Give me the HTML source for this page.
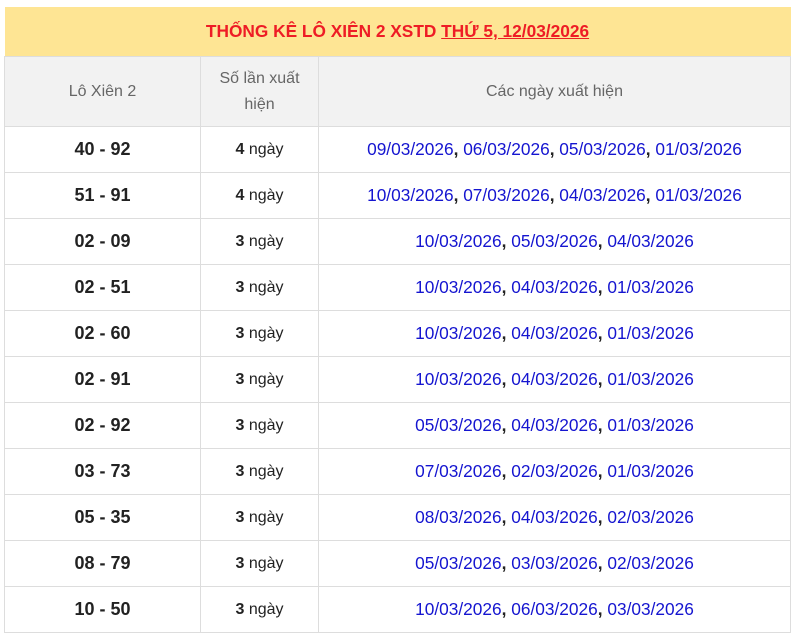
<!DOCTYPE html>
<html><head><meta charset="utf-8"><style>
body{margin:0;background:#fff;font-family:"Liberation Sans",Arial,sans-serif;}
table{position:absolute;left:4px;top:7px;width:787px;border-collapse:collapse;}
td,th{border:1px solid #ddd;text-align:center;padding:0;}
.t{height:49px;background:#fee594;color:#ee1c25;font-weight:bold;font-size:17.3px;border:none;border-bottom:1px solid #ddd;}
.t u{text-decoration:underline;}
th{background:#f2f2f2;color:#666;font-weight:normal;font-size:16px;height:69px;line-height:26px;}
td{height:45px;font-size:17px;color:#222;}
td.a{font-weight:bold;font-size:18px;}
td.b{font-size:16px;}
td.c{color:#1515d0;font-size:17.3px;}
td.c b{color:#222;}
</style></head><body>
<table>
<tr><td colspan="3" class="t">THỐNG KÊ LÔ XIÊN 2 XSTD <u>THỨ 5, 12/03/2026</u></td></tr>
<tr><th style="width:195px">Lô Xiên 2</th><th style="width:117px">Số lần xuất<br>hiện</th><th>Các ngày xuất hiện</th></tr>
<tr><td class="a">40 - 92</td><td class="b"><b>4</b> ngày</td><td class="c">09/03/2026<b>,</b> 06/03/2026<b>,</b> 05/03/2026<b>,</b> 01/03/2026</td></tr>
<tr><td class="a">51 - 91</td><td class="b"><b>4</b> ngày</td><td class="c">10/03/2026<b>,</b> 07/03/2026<b>,</b> 04/03/2026<b>,</b> 01/03/2026</td></tr>
<tr><td class="a">02 - 09</td><td class="b"><b>3</b> ngày</td><td class="c">10/03/2026<b>,</b> 05/03/2026<b>,</b> 04/03/2026</td></tr>
<tr><td class="a">02 - 51</td><td class="b"><b>3</b> ngày</td><td class="c">10/03/2026<b>,</b> 04/03/2026<b>,</b> 01/03/2026</td></tr>
<tr><td class="a">02 - 60</td><td class="b"><b>3</b> ngày</td><td class="c">10/03/2026<b>,</b> 04/03/2026<b>,</b> 01/03/2026</td></tr>
<tr><td class="a">02 - 91</td><td class="b"><b>3</b> ngày</td><td class="c">10/03/2026<b>,</b> 04/03/2026<b>,</b> 01/03/2026</td></tr>
<tr><td class="a">02 - 92</td><td class="b"><b>3</b> ngày</td><td class="c">05/03/2026<b>,</b> 04/03/2026<b>,</b> 01/03/2026</td></tr>
<tr><td class="a">03 - 73</td><td class="b"><b>3</b> ngày</td><td class="c">07/03/2026<b>,</b> 02/03/2026<b>,</b> 01/03/2026</td></tr>
<tr><td class="a">05 - 35</td><td class="b"><b>3</b> ngày</td><td class="c">08/03/2026<b>,</b> 04/03/2026<b>,</b> 02/03/2026</td></tr>
<tr><td class="a">08 - 79</td><td class="b"><b>3</b> ngày</td><td class="c">05/03/2026<b>,</b> 03/03/2026<b>,</b> 02/03/2026</td></tr>
<tr><td class="a">10 - 50</td><td class="b"><b>3</b> ngày</td><td class="c">10/03/2026<b>,</b> 06/03/2026<b>,</b> 03/03/2026</td></tr>
</table>
</body></html>
